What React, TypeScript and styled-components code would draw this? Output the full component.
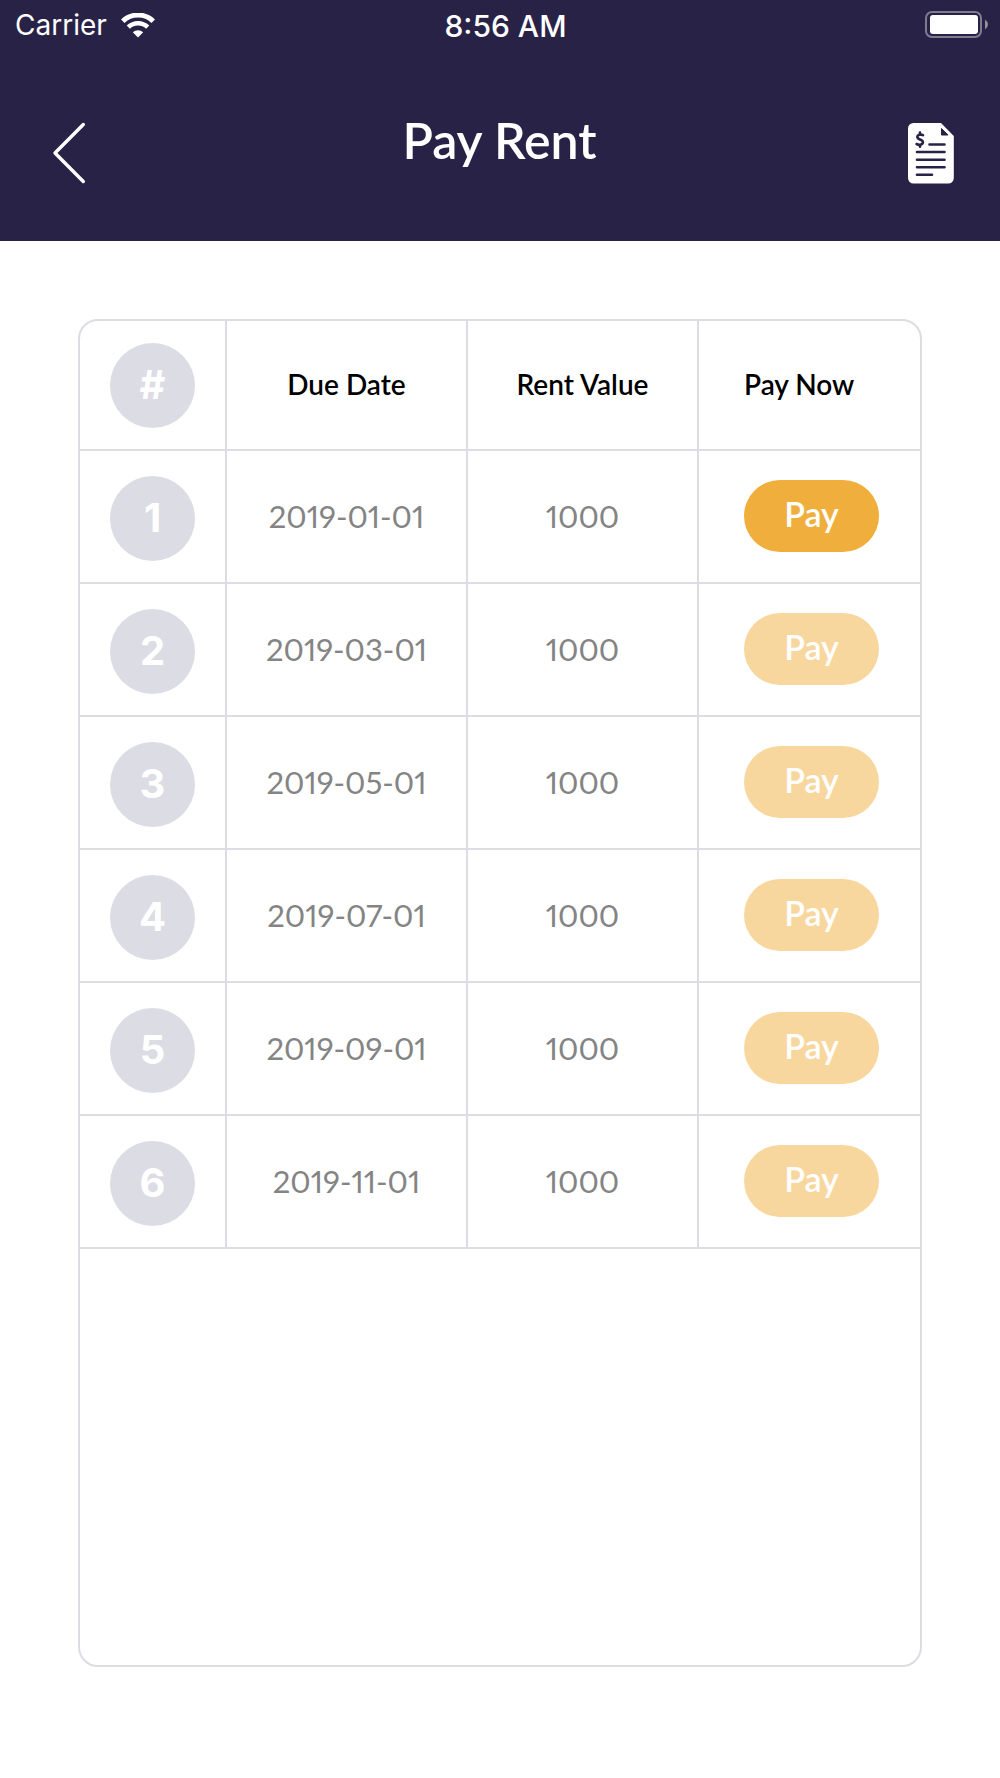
import React from "react";
import styled, { createGlobalStyle } from "styled-components";

const colors = {
  navy: "#292247",
  line: "#dcdce4",
  grey: "#848484",
  orange: "#f0ae3c",
};

const GlobalStyle = createGlobalStyle`
  *, *::before, *::after { box-sizing: border-box; }
  body {
    margin: 0;
    background: #fff;
    font-family: Lato, "Open Sans", sans-serif;
  }
`;

const Screen = styled.div`
  display: flex;
  flex-direction: column;
  min-height: 100vh;
`;

const Header = styled.header`
  background: ${colors.navy};
  color: #fff;
`;

const StatusBar = styled.div`
  display: grid;
  grid-template-columns: 1fr auto 1fr;
  align-items: center;
  height: 50px;
  padding: 0 12px 0 15px;
  font: 400 28px/34px Inter, sans-serif;
`;

const Carrier = styled.div`
  display: flex;
  align-items: center;
  gap: 14px;
`;

const Clock = styled.time`
  padding: 2px 0 0 8px;
  font-size: 30px;
  font-weight: 500;
`;

const BatteryIcon = styled.svg`
  justify-self: end;
`;

const NavBar = styled.nav`
  display: grid;
  grid-template-columns: 1fr auto 1fr;
  align-items: center;
  height: 191px;
  padding: 16px 45px 12px 50px;
`;

const IconButton = styled.button<{ $end?: boolean }>`
  display: flex;
  justify-self: ${(p) => (p.$end ? "end" : "start")};
  padding: 10px 0 0;
  border: 0;
  background: none;
  color: inherit;
  cursor: pointer;
`;

const Title = styled.h1`
  margin: 0;
  padding: 0 6px 16px 0;
  font-size: 50px;
  font-weight: 600;
  line-height: 60px;
`;

const Main = styled.main`
  display: flex;
  flex: 1;
  flex-direction: column;
  padding: 78px 78px 111px;
`;

const Card = styled.section`
  flex: 1;
  border: 2px solid ${colors.line};
  border-radius: 20px;
`;

const Table = styled.table`
  width: 100%;
  table-layout: fixed;
  border-spacing: 0;
  text-align: center;
`;

const Column = styled.col<{ $width: number }>`
  width: ${(p) => p.$width}px;
`;

const HeadCell = styled.th<{ $start?: boolean }>`
  height: 130px;
  padding: 0 0 2px ${(p) => (p.$start ? "45px" : "0")};
  border-bottom: 2px solid ${colors.line};
  color: #000;
  font-size: 28px;
  font-weight: 600;
  line-height: 34px;
  text-align: ${(p) => (p.$start ? "left" : "center")};
  &:first-child { padding: 0; }
  &:not(:last-child) { border-right: 2px solid ${colors.line}; }
`;

const Cell = styled.td<{ $start?: boolean }>`
  height: 133px;
  padding: 0 0 1px ${(p) => (p.$start ? "45px" : "0")};
  border-bottom: 2px solid ${colors.line};
  color: ${colors.grey};
  font-size: 31px;
  font-variant-numeric: proportional-nums;
  line-height: 38px;
  text-align: ${(p) => (p.$start ? "left" : "center")};
  &:first-child { padding: 3px 0 0; }
  &:not(:last-child) { border-right: 2px solid ${colors.line}; }
`;

const Badge = styled.span`
  display: flex;
  align-items: center;
  justify-content: center;
  width: 85px;
  height: 85px;
  margin: 0 auto;
  border-radius: 50%;
  background: ${colors.line};
  color: #fff;
  font: 700 40px/48px Inter, sans-serif;
`;

const PayButton = styled.button`
  display: block;
  width: 135px;
  height: 72px;
  padding: 0 0 4px;
  border: 0;
  border-radius: 36px;
  background: ${colors.orange};
  color: #fff;
  font: 600 34px/40px Lato, sans-serif;
  cursor: pointer;
  &:disabled {
    background: #f8d79e;
    cursor: default;
  }
`;

const payments = [
  { date: "2019-01-01", value: 1000, open: true },
  { date: "2019-03-01", value: 1000, open: false },
  { date: "2019-05-01", value: 1000, open: false },
  { date: "2019-07-01", value: 1000, open: false },
  { date: "2019-09-01", value: 1000, open: false },
  { date: "2019-11-01", value: 1000, open: false },
];

function WifiIcon() {
  return (
    <svg width="34" height="25" viewBox="0 0 34 25" fill="none" stroke="#fff" aria-hidden="true">
      <path d="M1.8 8.2a21.8 21.8 0 0 1 30.4 0" strokeWidth="5" />
      <path d="M7.3 14.2a14 14 0 0 1 19.4 0" strokeWidth="4.6" />
      <path d="M11.8 19.2a7.6 7.6 0 0 1 10.4 0L17 24.6z" fill="#fff" stroke="none" />
    </svg>
  );
}

function Battery() {
  return (
    <BatteryIcon width="63" height="28" viewBox="0 0 63 28" role="img" aria-label="Battery full">
      <rect x="1" y="1" width="55" height="25" rx="6" fill="none" stroke="#7f7b91" strokeWidth="2" />
      <rect x="5" y="4" width="48" height="19" rx="3" fill="#fff" />
      <path d="M60 8.500q3 2 3 5t-3 5z" fill="#94919f" />
    </BatteryIcon>
  );
}

function BackIcon() {
  return (
    <svg width="38" height="62" viewBox="0 0 38 62" fill="none" stroke="#fff" strokeWidth="3.400" strokeLinecap="round" strokeLinejoin="round" aria-hidden="true">
      <path d="M33.300 2.500 5 31l28.300 28.500" />
    </svg>
  );
}

function InvoiceIcon() {
  return (
    <svg width="48" height="62" viewBox="0 0 48 62" fill="none" aria-hidden="true">
      <path d="M6.500 1H34l12.800 13V56a5.500 5.500 0 0 1-5.500 5.500H6.500A5.500 5.500 0 0 1 1 56V6.500A5.500 5.500 0 0 1 6.500 1z" fill="#fff" />
      <path d="M34.500 6.500v6.500h6.500z" fill={colors.navy} stroke={colors.navy} strokeLinejoin="round" />
      <g stroke={colors.navy} strokeWidth="2.600" strokeLinecap="round">
        <path d="M22.500 22.500h15M10 30h27.500M10 37.700h27.500M10 45.200h27.500M10 52.700h15" />
        <path d="M16 13.200c-2.500-1.200-5.700-.4-5.700 1.800 0 3 5.600 2 5.600 5.300 0 2.600-3.600 3-6.300 1.700M13 10.500v2M13 23v1.700" />
      </g>
    </svg>
  );
}

export default function App() {
  return (
    <>
      <GlobalStyle />
      <Screen>
        <Header>
          <StatusBar>
            <Carrier>
              <span>Carrier</span>
              <WifiIcon />
            </Carrier>
            <Clock>8:56 AM</Clock>
            <Battery />
          </StatusBar>
          <NavBar>
            <IconButton type="button" aria-label="Back">
              <BackIcon />
            </IconButton>
            <Title>Pay Rent</Title>
            <IconButton type="button" aria-label="Invoices" $end>
              <InvoiceIcon />
            </IconButton>
          </NavBar>
        </Header>
        <Main>
          <Card>
            <Table>
              <colgroup>
                <Column $width={147} />
                <Column $width={241} />
                <Column $width={231} />
                <Column $width={221} />
              </colgroup>
              <thead>
                <tr>
                  <HeadCell scope="col"><Badge>#</Badge></HeadCell>
                  <HeadCell scope="col">Due Date</HeadCell>
                  <HeadCell scope="col">Rent Value</HeadCell>
                  <HeadCell scope="col" $start>Pay Now</HeadCell>
                </tr>
              </thead>
              <tbody>
                {payments.map((payment, index) => (
                  <tr key={payment.date}>
                    <Cell><Badge>{index + 1}</Badge></Cell>
                    <Cell>{payment.date}</Cell>
                    <Cell>{payment.value}</Cell>
                    <Cell $start>
                      <PayButton type="button" disabled={!payment.open}>Pay</PayButton>
                    </Cell>
                  </tr>
                ))}
              </tbody>
            </Table>
          </Card>
        </Main>
      </Screen>
    </>
  );
}
